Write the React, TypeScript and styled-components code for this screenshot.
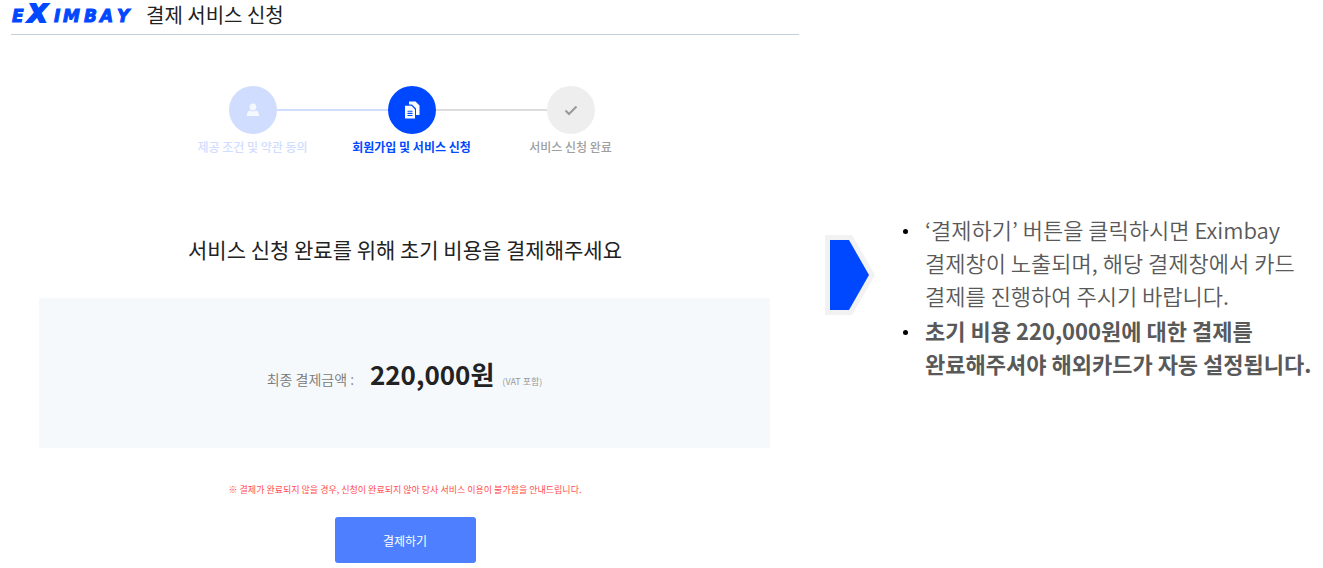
import React from "react";
import styled, { createGlobalStyle } from "styled-components";

const GlobalStyle = createGlobalStyle`
  * { box-sizing: border-box; }
  body {
    margin: 0;
    background: #fff;
    color: #222;
    font-family: "Noto Sans CJK KR", sans-serif;
    word-break: keep-all;
  }
`;

const Page = styled.div`
  display: grid;
  grid-template-columns: minmax(0, 788fr) 49px minmax(0, 423fr);
  column-gap: 26px;
  align-items: start;
  padding-left: 11px;
`;

const Panel = styled.main`
  display: flex;
  flex-direction: column;
  padding-bottom: 5px;
`;

const Header = styled.header`
  display: flex;
  align-items: center;
  padding-bottom: 4px;
  border-bottom: 1px solid #c3d0da;
`;

const Logo = styled.svg`
  flex: none;
  width: 135px;
  height: 30px;
  fill: #0048ff;
  stroke: #0048ff;
  font-family: "DejaVu Sans", sans-serif;
  font-weight: 700;
  font-style: italic;
`;

const Title = styled.h1`
  margin: 0;
  font-size: 20px;
  line-height: 30px;
  font-weight: 400;
`;

const Steps = styled.ol`
  display: grid;
  grid-template-columns: repeat(3, 159px);
  justify-content: center;
  margin: 51px 0 0;
  padding: 0 0 0 13px;
  list-style: none;
`;

type StepState = "done" | "current" | "upcoming";

const stepColors: Record<StepState, { circle: string; icon: string; label: string; line: string }> = {
  done: { circle: "#d0ddff", icon: "#f5f8ff", label: "#d0ddff", line: "#d0ddff" },
  current: { circle: "#0048ff", icon: "#ffffff", label: "#0048ff", line: "#dcdcdc" },
  upcoming: { circle: "#eeeeee", icon: "#999999", label: "#a0a0a0", line: "transparent" },
};

const Step = styled.li<{ $state: StepState }>`
  display: flex;
  flex-direction: column;
  gap: 4px;
  color: ${(p) => stepColors[p.$state].label};
  font-size: 12px;
  line-height: 18px;
  font-weight: ${(p) => (p.$state === "current" ? 700 : 500)};
  text-align: center;
  white-space: nowrap;
`;

const Track = styled.div`
  display: grid;
  grid-template-columns: 1fr 48px 1fr;
  align-items: center;
`;

const Line = styled.span<{ $color: string }>`
  height: 2px;
  background: ${(p) => p.$color};
`;

const Circle = styled.span<{ $state: StepState }>`
  display: flex;
  align-items: center;
  justify-content: center;
  height: 48px;
  border-radius: 50%;
  background: ${(p) => stepColors[p.$state].circle};
  color: ${(p) => stepColors[p.$state].icon};
`;

const Heading = styled.h2`
  margin: 78px 0 34px;
  font-size: 21px;
  line-height: 30px;
  font-weight: 400;
  text-align: center;
`;

const AmountCard = styled.section`
  display: flex;
  align-items: center;
  justify-content: center;
  min-height: 150px;
  margin: 0 29px 0 28px;
  padding-top: 10px;
  background: #f5f9fc;
`;

const AmountLine = styled.p`
  display: flex;
  align-items: baseline;
  margin: 0;
  line-height: 40px;
`;

const AmountLabel = styled.span`
  margin-right: 16px;
  color: #777;
  font-size: 14px;
  font-weight: 350;
`;

const Amount = styled.strong`
  margin-right: 8px;
  font-size: 26px;
  font-weight: 700;
`;

const Vat = styled.small`
  color: #999;
  font-size: 9px;
`;

const Warning = styled.p`
  margin: 35px 0 20px;
  color: #ff4d4d;
  font-size: 9px;
  line-height: 14px;
  text-align: center;
`;

const PayButton = styled.button`
  align-self: center;
  width: 141px;
  height: 46px;
  padding: 0;
  border: 0;
  border-radius: 3px;
  background: #4d7fff;
  color: #fff;
  font: inherit;
  font-size: 12px;
  cursor: pointer;
`;

const Arrow = styled.svg`
  width: 50px;
  height: 80px;
  margin-top: 235px;
`;

const Notes = styled.ul`
  display: flex;
  flex-direction: column;
  gap: 2px;
  margin: 213px 0 0;
  padding: 0 0 0 3px;
  list-style: none;
  font-size: 22px;
  line-height: 33px;
`;

const Note = styled.li<{ $strong?: boolean }>`
  display: grid;
  grid-template-columns: 5px minmax(0, 1fr);
  column-gap: 17px;
  color: #595959;
  font-weight: ${(p) => (p.$strong ? 700 : 350)};

  &::before {
    content: "";
    height: 5px;
    margin-top: 16px;
    border-radius: 50%;
    background: #000;
  }
`;

const PersonIcon = () => (
  <svg width="14" height="14" viewBox="0 0 14 14" fill="currentColor" aria-hidden="true">
    <circle cx="7" cy="4" r="3.4" />
    <path d="M.8 13c0-3.200 1.200-5.200 3.200-5.600C5.800 8.600 8.200 8.600 10 7.400c2 .4 3.200 2.400 3.200 5.600z" />
  </svg>
);

const DocumentsIcon = () => (
  <svg width="16" height="18" viewBox="0 0 16 18" aria-hidden="true">
    <path d="M5 .5h6.500L15.500 4.500V14h-3.500V7.500L8 3.500H5z" fill="currentColor" />
    <path d="M1 4.800h6.500L11 8.500V17.500H1z" fill="currentColor" />
    <path d="M3.500 10.300h5M3.500 12.400h5M3.500 14.500h5" stroke="#0048ff" strokeWidth="1.100" />
  </svg>
);

const CheckIcon = () => (
  <svg width="14" height="12" viewBox="0 0 14 12" fill="none" aria-hidden="true">
    <path d="M1.500 6.500l3.500 3.500L12.500 2.500" stroke="currentColor" strokeWidth="2" />
  </svg>
);

const steps: { label: string; state: StepState; before: string; icon: React.ReactNode }[] = [
  { label: "제공 조건 및 약관 동의", state: "done", before: "transparent", icon: <PersonIcon /> },
  { label: "회원가입 및 서비스 신청", state: "current", before: "#d0ddff", icon: <DocumentsIcon /> },
  { label: "서비스 신청 완료", state: "upcoming", before: "#dcdcdc", icon: <CheckIcon /> },
];

export default function App() {
  return (
    <>
      <GlobalStyle />
      <Page>
        <Panel>
          <Header>
            <Logo viewBox="0 0 135 30" role="img" aria-label="Eximbay">
              <text y="22" fontSize="17" strokeWidth="1">
                <tspan x="1">E</tspan>
                <tspan x="17" fontSize="25" strokeWidth="2">X</tspan>
                <tspan x="43">I</tspan>
                <tspan x="52">M</tspan>
                <tspan x="73">B</tspan>
                <tspan x="89">A</tspan>
                <tspan x="106">Y</tspan>
              </text>
            </Logo>
            <Title>결제 서비스 신청</Title>
          </Header>

          <Steps>
            {steps.map((s) => (
              <Step key={s.label} $state={s.state} aria-current={s.state === "current" ? "step" : undefined}>
                <Track>
                  <Line $color={s.before} />
                  <Circle $state={s.state}>{s.icon}</Circle>
                  <Line $color={stepColors[s.state].line} />
                </Track>
                <span>{s.label}</span>
              </Step>
            ))}
          </Steps>

          <Heading>서비스 신청 완료를 위해 초기 비용을 결제해주세요</Heading>

          <AmountCard>
            <AmountLine>
              <AmountLabel>최종 결제금액 :</AmountLabel>
              <Amount>220,000원</Amount>
              <Vat>(VAT 포함)</Vat>
            </AmountLine>
          </AmountCard>

          <Warning>※ 결제가 완료되지 않을 경우, 신청이 완료되지 않아 당사 서비스 이용이 불가함을 안내드립니다.</Warning>
          <PayButton type="button">결제하기</PayButton>
        </Panel>

        <Arrow viewBox="0 0 50 80" aria-hidden="true">
          <path d="M0 0h27l23 40-23 40H0z" fill="#f2f2f2" />
          <path d="M5 5h19l20 35-20 35H5z" fill="#0048ff" />
        </Arrow>

        <Notes>
          <Note>‘결제하기’ 버튼을 클릭하시면 Eximbay 결제창이 노출되며, 해당 결제창에서 카드 결제를 진행하여 주시기 바랍니다.</Note>
          <Note $strong>초기 비용 220,000원에 대한 결제를 완료해주셔야 해외카드가 자동 설정됩니다.</Note>
        </Notes>
      </Page>
    </>
  );
}
